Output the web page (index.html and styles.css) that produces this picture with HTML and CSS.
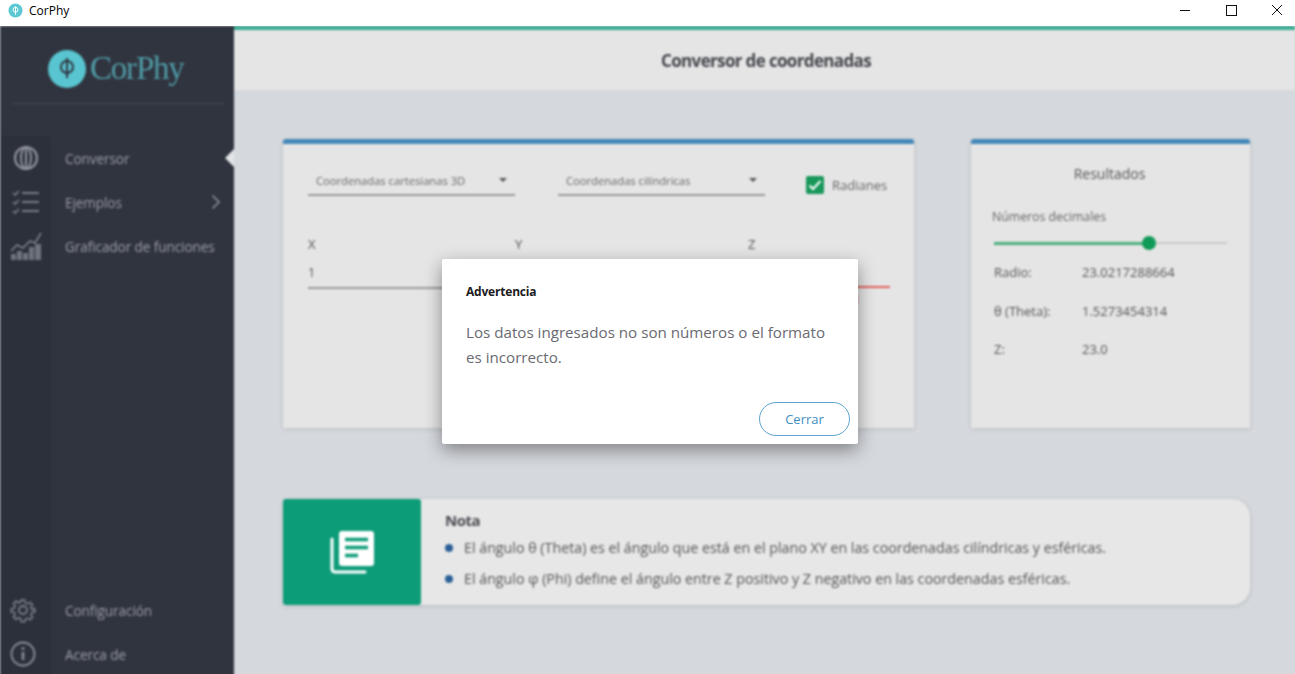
FILE: index.html
```html
<!DOCTYPE html>
<html lang="es">
<head>
<meta charset="utf-8">
<title>CorPhy</title>
<link rel="stylesheet" href="styles.css">
</head>
<body>
<div class="window">
  <header class="titlebar">
    <div class="title-left">
      <svg class="title-logo" viewBox="0 0 16 16"><circle cx="8" cy="8" r="7.5" fill="#5cc8d2"/><circle cx="8" cy="7.2" r="2.6" fill="none" stroke="#fff" stroke-width="1"/><path d="M8 3.5v9" stroke="#fff" stroke-width="1"/></svg>
      <span>CorPhy</span>
    </div>
    <div class="window-controls">
      <svg class="wc" viewBox="0 0 46 20"><path d="M23 10.500h10" stroke="#111" fill="none"/></svg>
      <svg class="wc" viewBox="0 0 46 20"><rect x="23.500" y="5.500" width="10" height="10" stroke="#111" fill="none"/></svg>
      <svg class="wc" viewBox="0 0 46 20"><path d="M23 5l10 10M33 5L23 15" stroke="#111" fill="none"/></svg>
    </div>
  </header>

  <div class="stage">
    <div class="app">
      <aside class="sidebar">
        <div class="logo">
          <svg class="logo-mark" viewBox="0 0 38 38"><circle cx="19" cy="19" r="19" fill="#58c5d0"/><circle cx="19" cy="17" r="6" fill="none" stroke="#30343f" stroke-width="2"/><path d="M19 8v20" stroke="#30343f" stroke-width="2"/></svg>
          <span class="logo-text">CorPhy</span>
        </div>
        <div class="side-body">
          <nav class="nav">
            <a class="nav-item active">
              <span class="nav-icon"><svg viewBox="0 0 26 26"><circle cx="13" cy="13" r="11" fill="none" stroke="#8f939c" stroke-width="2.2"/><ellipse cx="13" cy="13" rx="5" ry="11" fill="none" stroke="#8f939c" stroke-width="2"/><path d="M13 2v22" stroke="#8f939c" stroke-width="2"/></svg></span>
              <span class="nav-label">Conversor</span>
            </a>
            <a class="nav-item">
              <span class="nav-icon"><svg viewBox="0 0 30 26"><path d="M11 4h17M11 13h17M11 22h17" stroke="#787c86" stroke-width="2"/><path d="M2 4l2 2 4-4M2 13l2 2 4-4M2 22l2 2 4-4" stroke="#787c86" stroke-width="1.6" fill="none"/></svg></span>
              <span class="nav-label">Ejemplos</span>
              <svg class="chev" viewBox="0 0 10 16"><path d="M1.5 1.5L8 8l-6.500 6.500" fill="none" stroke="#8a8e97" stroke-width="1.600"/></svg>
            </a>
            <a class="nav-item">
              <span class="nav-icon"><svg viewBox="0 0 32 32"><path d="M1 30v-6h5v6zM7 30v-9h5v9zM13 30v-7h5v7zM19 30V17h5v13zM25 30V14h6v16z" fill="#6f737d"/><path d="M1 21l6-6 6 3 7-7 5 2 6-10" fill="none" stroke="#7d818b" stroke-width="1.600"/></svg></span>
              <span class="nav-label">Graficador de funciones</span>
            </a>
          </nav>
          <nav class="nav nav-bottom">
            <a class="nav-item">
              <span class="nav-icon"><svg viewBox="0 0 26 26"><circle cx="13" cy="13" r="4" fill="none" stroke="#7a7e88" stroke-width="1.800"/><path d="M11 2h4l.7 3.200 2.300 1 2.800-1.800 2.800 2.800-1.800 2.800 1 2.300L26 11.700v3.600l-3.200.7-1 2.300 1.800 2.800-2.800 2.800-2.800-1.800-2.300 1L15 26h-4l-.7-3.400-2.300-1-2.800 1.800-2.800-2.800 1.800-2.800-1-2.300L0 15.300v-3.600l3.200-.7 1-2.300-1.800-2.800 2.800-2.800 2.800 1.800 2.300-1z" transform="translate(1.300 1.300) scale(.9)" fill="none" stroke="#7a7e88" stroke-width="1.800"/></svg></span>
              <span class="nav-label">Configuración</span>
            </a>
            <a class="nav-item">
              <span class="nav-icon"><svg viewBox="0 0 26 26"><circle cx="13" cy="13" r="11.500" fill="none" stroke="#8a8e97" stroke-width="1.800"/><path d="M13 11v8" stroke="#8a8e97" stroke-width="2.600"/><circle cx="13" cy="7.500" r="1.500" fill="#8a8e97"/></svg></span>
              <span class="nav-label">Acerca de</span>
            </a>
          </nav>
        </div>
      </aside>

      <main class="main">
        <div class="page-head">Conversor de coordenadas</div>
        <div class="content">
          <div class="cards">
            <section class="card card-form">
              <div class="selects">
                <div class="select"><span>Coordenadas cartesianas 3D</span><i class="caret"></i></div>
                <div class="select"><span>Coordenadas cilíndricas</span><i class="caret"></i></div>
                <label class="check">
                  <svg class="check-box" viewBox="0 0 18 18"><rect width="18" height="18" rx="2" fill="#17985a"/><path d="M3.500 9.500l3.500 3.500 7.500-8" fill="none" stroke="#fff" stroke-width="2"/></svg>
                  <span>Radianes</span>
                </label>
              </div>
              <div class="fields">
                <div class="field"><label>X</label><div class="input">1</div></div>
                <div class="field"><label>Y</label><div class="input"></div></div>
                <div class="field field-error"><label>Z</label><div class="input"></div><small>Dato incorrecto aquí</small></div>
              </div>
            </section>
            <section class="card card-results">
              <h2>Resultados</h2>
              <div class="slider-label">Números decimales</div>
              <div class="slider"><div class="slider-fill"></div><div class="slider-thumb"></div></div>
              <dl class="results">
                <div><dt>Radio:</dt><dd>23.0217288664</dd></div>
                <div><dt>θ (Theta):</dt><dd>1.5273454314</dd></div>
                <div><dt>Z:</dt><dd>23.0</dd></div>
              </dl>
            </section>
          </div>
          <section class="note">
            <div class="note-icon">
              <svg viewBox="0 0 44 44"><path d="M2 9v30a3 3 0 0 0 3 3h30" fill="none" stroke="#fff" stroke-width="3" stroke-linecap="round"/><rect x="9" y="1" width="35" height="35" rx="3" fill="#fff"/><path d="M15 9.500h23M15 17.500h23M15 25.500h13" stroke="#0d9c78" stroke-width="3.500"/></svg>
            </div>
            <div class="note-body">
              <h3>Nota</h3>
              <ul>
                <li>El ángulo θ (Theta) es el ángulo que está en el plano XY en las coordenadas cilíndricas y esféricas.</li>
                <li>El ángulo φ (Phi) define el ángulo entre Z positivo y Z negativo en las coordenadas esféricas.</li>
              </ul>
            </div>
          </section>
        </div>
      </main>
    </div>

    <div class="dialog" role="dialog">
      <h4>Advertencia</h4>
      <p>Los datos ingresados no son números o el formato es incorrecto.</p>
      <div class="dialog-actions"><button class="btn">Cerrar</button></div>
    </div>
  </div>
</div>
</body>
</html>
```
FILE: styles.css
```css
* { box-sizing: border-box; }
html, body { margin: 0; padding: 0; height: 100%; overflow: hidden; background: #fff; }
body { font-family: "Open Sans", "Noto Sans", sans-serif; }

.window { width: 1295px; height: 674px; display: flex; flex-direction: column; }

.titlebar { height: 26px; flex: none; display: flex; justify-content: space-between; align-items: flex-start; background: #fff; }
.title-left { display: flex; align-items: center; gap: 6px; height: 20px; padding-left: 8px; font-size: 12px; color: #000; }
.title-logo { width: 15px; height: 15px; }
.window-controls { display: flex; }
.wc { width: 46px; height: 20px; display: block; }

.stage { position: relative; flex: 1; min-height: 0; overflow: hidden; background: #d5d8dd; }
.app { display: flex; height: calc(100% + 6px); filter: blur(1.2px); background: #d5d8dd; }

.sidebar { width: 234px; flex: none; background: #30343f; display: flex; flex-direction: column; color: #9a9da5; border-left: 1px solid #3c4049; }
.logo { height: 78px; flex: none; margin: 0 9px 0 11px; border-bottom: 1px solid #454852; display: flex; align-items: center; padding: 8px 0 0 36px; gap: 4px; }
.logo-mark { width: 38px; height: 38px; flex: none; }
.logo-text { font-family: "Liberation Serif", serif; font-size: 33px; letter-spacing: -1.200px; line-height: 1; color: #4f9aa5; }

.side-body { flex: 1; min-height: 0; margin-top: 32px; display: flex; flex-direction: column; background: linear-gradient(90deg, #2c303a 50px, transparent 50px); }
.nav-bottom { margin-top: auto; margin-bottom: 4px; }
.nav-bottom .nav-icon { padding-right: 6px; }
.nav-item { position: relative; height: 44px; display: flex; align-items: center; font-size: 14px; }
.nav-icon { width: 50px; flex: none; display: flex; justify-content: center; align-items: center; }
.nav-icon svg { width: 26px; height: 26px; display: block; }
.nav-item:nth-child(2) .nav-icon svg { width: 30px; }
.nav-item:nth-child(3) .nav-icon svg { width: 32px; height: 32px; }
.nav-label { margin-left: 14px; font-family: "Open Sans", sans-serif; font-size: 13.600px; letter-spacing: -.1px; white-space: nowrap; }
.chev { position: absolute; right: 13px; top: 14px; width: 10px; height: 16px; }
.active::after { content: ""; position: absolute; right: 0; top: 13px; border: 9px solid transparent; border-left-width: 0; border-right-color: #e2e4e7; }

.main { flex: 1; min-width: 0; display: flex; flex-direction: column; border-top: 4px solid #3aac92; }
.page-head { height: 61px; flex: none; background: #e5e5e5; display: flex; align-items: center; justify-content: center; border-bottom: 1px solid #d9dadb; font-weight: 700; font-size: 17px; letter-spacing: -.65px; color: #45474d; padding-left: 3px; }
.content { padding: 48px 45px 0 49px; }
.cards { display: flex; justify-content: space-between; }
.card { height: 289px; background: #e5e5e5; border-top: 5px solid #4488b8; border-radius: 3px 3px 0 0; box-shadow: 0 1px 5px rgba(0,0,0,.12); }
.card-form { width: 631px; padding: 26px 24px 0 25px; }
.card-results { width: 279px; padding: 20px 23px 0 21px; }

.selects { display: flex; align-items: flex-start; }
.select { width: 207px; height: 26px; border-bottom: 2px solid #999; display: flex; align-items: center; justify-content: space-between; padding: 0 8px 4px; font-size: 11.200px; color: #666; margin-right: 43px; }
.select:nth-child(2) { margin-right: 41px; }
.caret { border: 4px solid transparent; border-top-color: #555; border-bottom-width: 0; }
.check { display: flex; align-items: center; gap: 8px; font-size: 13px; color: #666; padding-top: 6px; }
.check-box { width: 18px; height: 18px; flex: none; }

.fields { display: grid; grid-template-columns: 207px 233px 142px; margin-top: 40px; }
.field label { display: block; font-size: 13px; line-height: 16px; color: #555; }
.input { height: 32px; margin-top: 5px; font-size: 12.500px; line-height: 32px; color: #555; border-bottom: 2px solid #999; }
.field:nth-child(2) .input { margin-right: 23px; }
.field-error .input { height: 31px; border-bottom-color: #e0615c; }
.field-error small { display: block; font-size: 11.600px; line-height: 16px; margin-top: 4px; color: #e2736e; white-space: nowrap; }

.card-results h2 { margin: 0; text-align: center; font-weight: 400; font-size: 14px; line-height: 18px; color: #555; padding-top: 1px; }
.slider-label { margin-top: 26px; font-size: 12.300px; line-height: 16px; color: #666; }
.slider { position: relative; height: 2px; margin: 17px 0 0 2px; width: 233px; background: #c9caca; }
.slider-fill { width: 155px; height: 3px; background: #4caf7d; }
.slider-thumb { position: absolute; left: 148px; top: -6px; width: 14px; height: 14px; border-radius: 50%; background: #109a58; }
.results { margin: 19px 0 0 2px; font-size: 13px; color: #555; }
.results div { display: flex; height: 38.500px; line-height: 18px; }
.results dt { width: 88px; }
.results dd { margin: 0; }

.note { margin-top: 71px; height: 106px; display: flex; background: #e7e7e7; border-radius: 3px 18px 18px 3px; box-shadow: 0 1px 5px rgba(0,0,0,.14); }
.note-icon { width: 138px; flex: none; background: #0d9c78; border-radius: 3px; display: flex; align-items: center; justify-content: center; }
.note-icon svg { width: 44px; height: 44px; }
.note-body { padding: 11px 0 0 24px; color: #555; }
.note-body h3 { margin: 0; font-size: 15px; letter-spacing: -.5px; line-height: 20px; font-weight: 700; color: #4a4a52; }
.note-body ul { margin: 8px 0 0; padding: 0; list-style: none; }
.note-body li { position: relative; height: 31px; line-height: 20px; padding-left: 19px; font-size: 14.250px; white-space: nowrap; }
.note-body li::before { content: ""; position: absolute; left: 0; top: 6px; width: 8px; height: 8px; border-radius: 50%; background: #2b6096; }

.dialog { position: absolute; left: 442px; top: 233px; width: 416px; height: 185px; background: #fff; border-radius: 2px; box-shadow: 0 6px 18px rgba(0,0,0,.4); padding: 24px 8px 8px 24px; display: flex; flex-direction: column; }
.dialog h4 { margin: 0; font-size: 12px; line-height: 18px; font-weight: 700; letter-spacing: -.2px; color: #1c1c22; }
.dialog p { margin: 19px 16px 0 0; font-size: 15.160px; line-height: 25px; color: #6a6a72; }
.dialog-actions { margin-top: auto; display: flex; justify-content: flex-end; }
.btn { width: 91px; height: 34px; border: 1px solid #5da3cd; border-radius: 17px; background: #fff; color: #3f8fc2; font: inherit; font-size: 13px; padding: 0; }
```
